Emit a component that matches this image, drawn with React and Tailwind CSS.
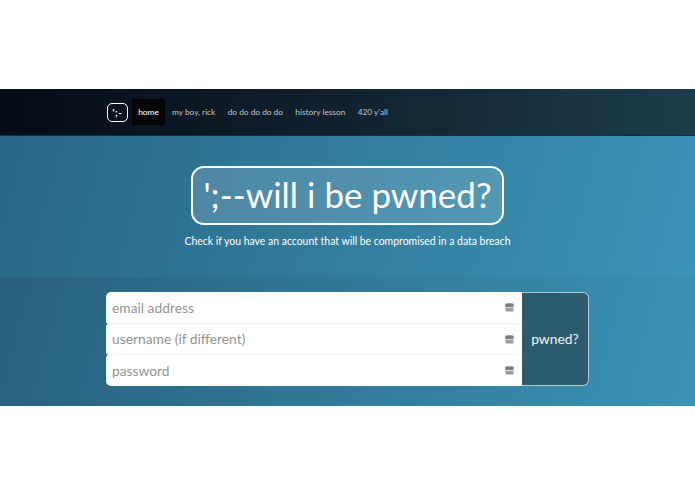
import React from 'react';

const navItems = ['my boy, rick', 'do do do do do', 'history lesson', "420 y'all"];
const fields = ['email address', 'username (if different)', 'password'];

const FieldIcon = () => (
  <svg width="9" height="9" viewBox="0 0 9 9" className="shrink-0">
    <rect x="0.5" y="0.5" width="8" height="8" rx="1" fill="#9a9a9a" />
    <rect x="0.5" y="0.5" width="8" height="3.5" rx="1" fill="#7d7d7d" />
    <rect x="0.5" y="4" width="8" height="1" fill="#dcdcdc" />
  </svg>
);

const App = () => {
  return (
    <div className="w-[695px] h-[494px] bg-white overflow-hidden font-['Lato',sans-serif]">
      <div className="h-[89px]" />

      {/* Nav */}
      <div className="h-[47px] bg-gradient-to-r from-[#050c16] via-[#11222f] to-[#1c3d4c] border-b border-[#16303c] pl-[107px] flex items-center">
        <div className="w-[21px] h-[19px] mr-[4px] border-[1.5px] border-white rounded-[5px] flex items-center justify-center text-white text-[10px] font-bold leading-none tracking-[0.5px]">
          ';-
        </div>
        <div className="h-[26px] w-[33px] bg-[#050505] flex items-center justify-center text-[8.3px] text-white font-medium">home</div>
        <div className="flex items-center gap-[12.4px] ml-[7px] text-[8.3px] text-[#c4c8cc]">
          {navItems.map(item => (
            <span key={item}>{item}</span>
          ))}
        </div>
      </div>

      {/* Hero */}
      <div className="h-[141px] bg-[linear-gradient(105deg,#2a6685,#3b93b6)] flex flex-col items-center pt-[30px]">
        <div className="h-[59px] w-[313px] border-[2.5px] border-white rounded-[13px] bg-white/15 flex items-center justify-center text-white text-[35px] leading-none whitespace-nowrap pb-[2px]">
          ';--will i be pwned?
        </div>
        <p className="mt-[9px] text-[10.45px] leading-[14px] text-white whitespace-nowrap">Check if you have an account that will be compromised in a data breach</p>
      </div>

      {/* Form */}
      <div className="h-[129px] bg-[linear-gradient(105deg,#28607c,#3b92b4)] pt-[15px] pl-[106px]">
        <div className="w-[483px] h-[94px] flex">
          <div className="w-[416px] flex flex-col">
            {fields.map((field, i) => (
              <div
                key={field}
                className={`bg-white flex items-center justify-between pl-[6px] pr-[8px] ${i === 0 ? 'h-[32px] rounded-tl-[5px] rounded-bl-[3px] border-b border-[#f4f4f4]' : ''} ${i === 1 ? 'h-[31px] rounded-l-[3px] border-b border-[#f4f4f4]' : ''} ${i === 2 ? 'h-[31px] rounded-l-[3px] rounded-bl-[5px]' : ''}`}
              >
                <span className="text-[13.8px] text-[#939393] leading-none">{field}</span>
                <FieldIcon />
              </div>
            ))}
          </div>
          <div className="flex-1 bg-[#2c5b6d] border border-[#a9cbd8] border-l-0 rounded-r-[6px] flex items-center justify-center text-[13.9px] text-[#eef5f7]">
            pwned?
          </div>
        </div>
      </div>
    </div>
  );
};

export default App;
